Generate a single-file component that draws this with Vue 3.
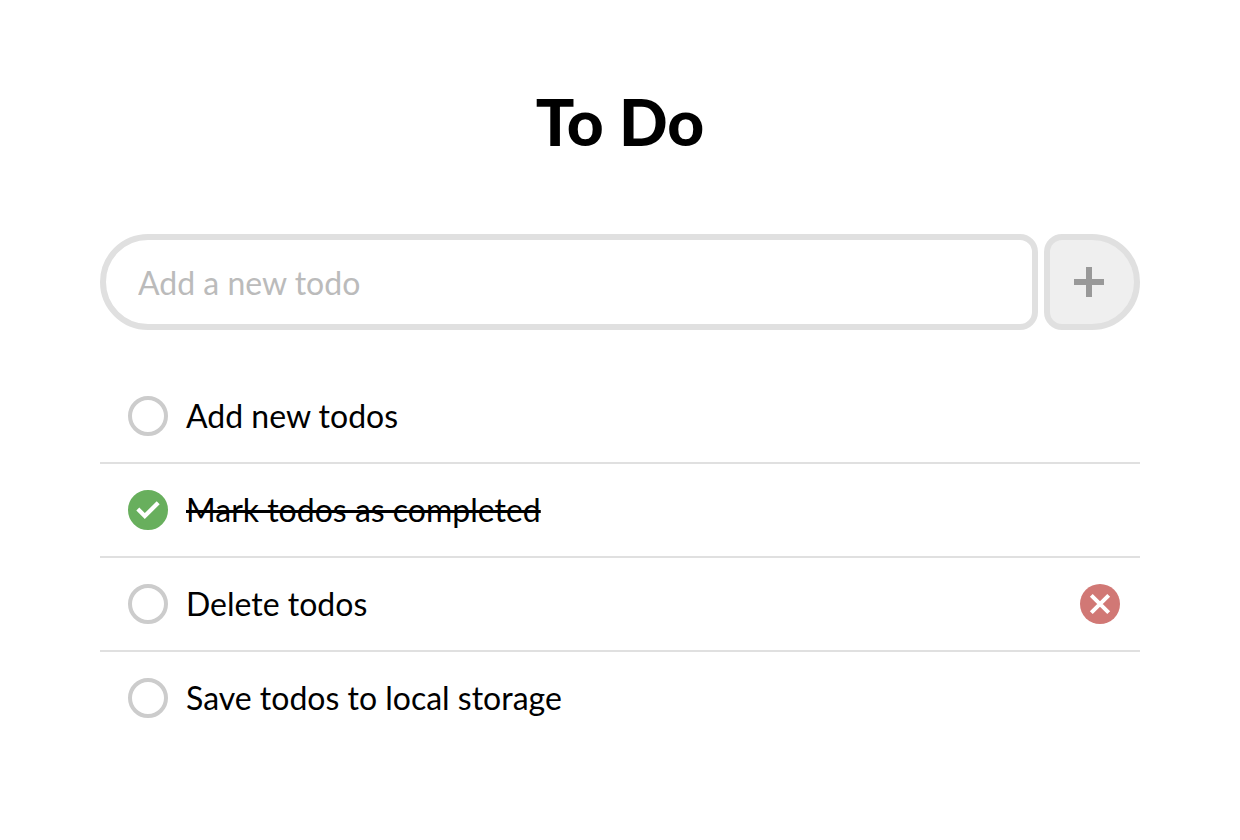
<script setup>
import { ref } from 'vue'

const draft = ref('')
const todos = ref([
  { id: 1, text: 'Add new todos', done: false, active: false },
  { id: 2, text: 'Mark todos as completed', done: true, active: false },
  { id: 3, text: 'Delete todos', done: false, active: true },
  { id: 4, text: 'Save todos to local storage', done: false, active: false }
])
let nextId = 5

function addTodo() {
  const text = draft.value.trim()
  if (!text) return
  todos.value.push({ id: nextId++, text, done: false, active: false })
  draft.value = ''
}

function removeTodo(id) {
  todos.value = todos.value.filter((todo) => todo.id !== id)
}
</script>

<template>
  <main class="page">
    <h1 class="title">To Do</h1>

    <form class="entry" @submit.prevent="addTodo">
      <input v-model="draft" class="entry-input" type="text" placeholder="Add a new todo" aria-label="Add a new todo" />
      <button class="entry-add" type="submit" aria-label="Add">
        <svg width="30" height="30" viewBox="0 0 30 30" aria-hidden="true">
          <path d="M12 0h6v12h12v6H18v12h-6V18H0v-6h12z" fill="#999" />
        </svg>
      </button>
    </form>

    <ul class="list">
      <li v-for="todo in todos" :key="todo.id" class="item" :class="{ active: todo.active }">
        <label class="item-label">
          <span class="tick">
            <input v-model="todo.done" class="tick-input" type="checkbox" />
            <svg v-if="todo.done" class="tick-mark" viewBox="0 0 40 40" aria-hidden="true">
              <path d="M9.8 19l7 7L30.2 12.8" fill="none" stroke="#fff" stroke-width="4.2" />
            </svg>
          </span>
          <span class="item-text" :class="{ done: todo.done }">{{ todo.text }}</span>
        </label>
        <button class="remove" type="button" :aria-label="'Delete ' + todo.text" @click="removeTodo(todo.id)">
          <svg width="40" height="40" viewBox="0 0 40 40" aria-hidden="true">
            <path d="M11.3 11.3l17.4 17.4M28.7 11.3L11.3 28.7" fill="none" stroke="#fff" stroke-width="4" />
          </svg>
        </button>
      </li>
    </ul>
  </main>
</template>

<style>
body {
  margin: 0;
  background: #fff;
}
</style>

<style scoped>
.page {
  box-sizing: border-box;
  padding: 84px 100px;
  font-family: Lato, "Liberation Sans", sans-serif;
  font-size: 32px;
  line-height: 40px;
  color: #000;
}

.title {
  margin: 0 0 74px;
  font-size: 64px;
  line-height: 76px;
  font-weight: 900;
  text-align: center;
}

.entry {
  display: flex;
  gap: 6px;
  margin-bottom: 40px;
}

.entry-input {
  box-sizing: border-box;
  flex: 1;
  min-width: 0;
  height: 96px;
  padding: 0 32px;
  border: 6px solid #e0e0e0;
  border-radius: 48px 18px 18px 48px;
  background: #fff;
  color: inherit;
  font: inherit;
  outline: none;
}

.entry-input::placeholder {
  color: #bbb;
  opacity: 1;
}

.entry-add {
  box-sizing: border-box;
  display: flex;
  align-items: center;
  justify-content: center;
  width: 96px;
  height: 96px;
  padding: 0 6px 0 0;
  border: 6px solid #e0e0e0;
  border-radius: 18px 48px 48px 18px;
  background: #efefef;
  cursor: pointer;
}

.list {
  margin: 0;
  padding: 0;
  list-style: none;
}

.item {
  display: flex;
  align-items: center;
  padding: 26px 20px 26px 28px;
}

.item + .item {
  border-top: 2px solid #e0e0e0;
}

.item-label {
  display: flex;
  flex: 1;
  align-items: center;
  gap: 18px;
  cursor: pointer;
}

.tick {
  position: relative;
  flex: none;
  width: 40px;
  height: 40px;
}

.tick-input {
  box-sizing: border-box;
  display: block;
  width: 40px;
  height: 40px;
  margin: 0;
  border: 4px solid #ccc;
  border-radius: 50%;
  appearance: none;
  cursor: pointer;
}

.tick-input:checked {
  border-color: #68af5d;
  background: #68af5d;
}

.tick-mark {
  position: absolute;
  inset: 0;
  pointer-events: none;
}

.done {
  text-decoration: line-through;
  text-decoration-thickness: 3px;
}

.remove {
  width: 40px;
  height: 40px;
  padding: 0;
  border: 0;
  border-radius: 50%;
  background: #d17875;
  cursor: pointer;
  opacity: 0;
}

.remove svg {
  display: block;
}

.item:hover .remove,
.remove:focus-visible,
.active .remove {
  opacity: 1;
}
</style>
